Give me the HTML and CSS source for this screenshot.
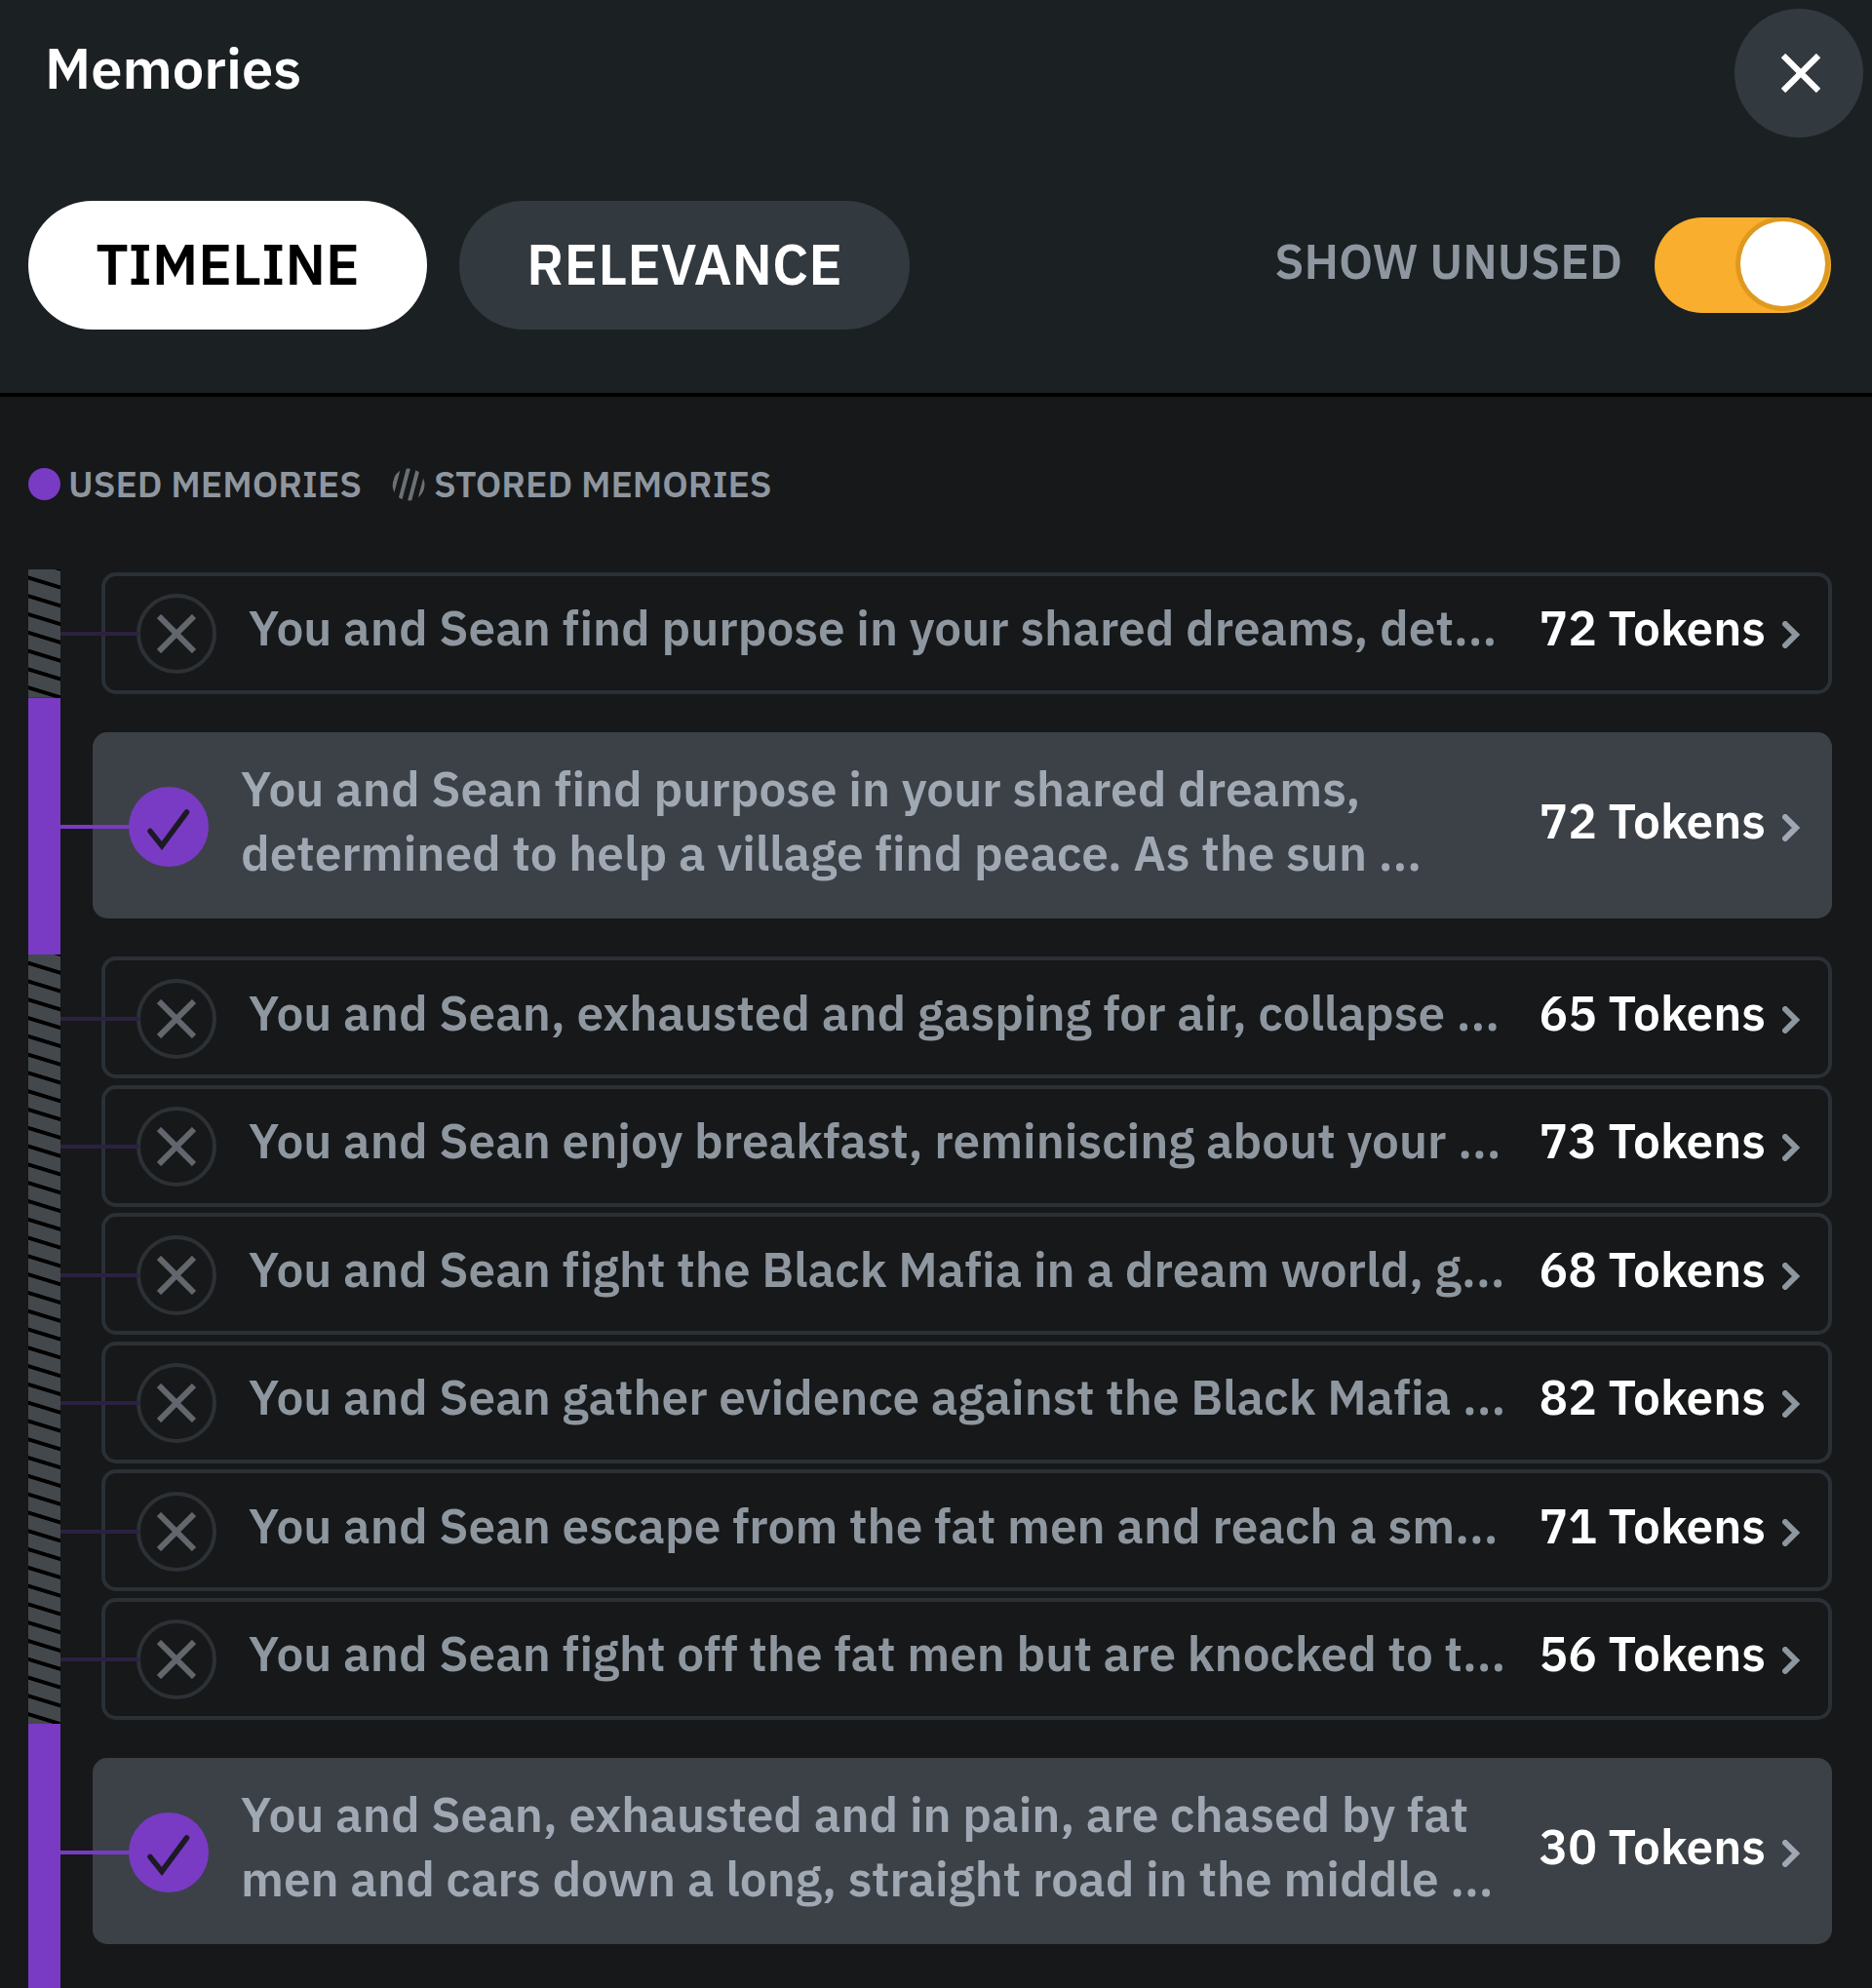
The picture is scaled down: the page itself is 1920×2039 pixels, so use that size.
FILE: index.html
```
<!DOCTYPE html>
<html lang="en">
<head>
<meta charset="utf-8">
<title>Memories</title>
<link rel="stylesheet" href="styles.css">
</head>
<body>
<svg class="defs" aria-hidden="true">
  <symbol id="cross" viewBox="0 0 40 40"><path d="M2 2 38 38M38 2 2 38"/></symbol>
  <symbol id="check" viewBox="0 0 82 82"><path d="M22 45.5 34 60.5 59.500 26"/></symbol>
  <symbol id="chevron" viewBox="0 0 18 28"><path d="M3 3 14 14 3 25"/></symbol>
</svg>
<header class="header">
  <div class="title-row">
    <h1 class="title">Memories</h1>
    <button class="close" aria-label="Close"><svg><use href="#cross"/></svg></button>
  </div>
  <div class="controls">
    <button class="tab tab-timeline active">TIMELINE</button>
    <button class="tab tab-relevance">RELEVANCE</button>
    <span class="toggle-label">SHOW UNUSED</span>
    <span class="toggle" role="switch" aria-checked="true"><span class="knob"></span></span>
  </div>
</header>
<main>
  <div class="legend">
    <span class="dot"></span><span class="legend-text legend-used">USED MEMORIES</span>
    <svg class="hatch" viewBox="0 0 34 34"><clipPath id="c"><circle cx="17" cy="17" r="16.500"/></clipPath><g clip-path="url(#c)"><path d="M-2 34 7 0M8 34 17 0M18 34 27 0M28 34 37 0"/></g></svg>
    <span class="legend-text">STORED MEMORIES</span>
  </div>
  <div class="timeline">
    <section class="group stored">
      <article class="row"><div class="card"><span class="mark"><svg><use href="#cross"/></svg></span><p class="text">You and Sean find purpose in your shared dreams, det...</p><span class="tokens">72 Tokens</span><svg class="chevron"><use href="#chevron"/></svg></div></article>
    </section>
    <section class="group used">
      <article class="row"><div class="card"><span class="mark"><svg><use href="#check"/></svg></span><p class="text">You and Sean find purpose in your shared dreams,<br>determined to help a village find peace. As the sun ...</p><span class="tokens">72 Tokens</span><svg class="chevron"><use href="#chevron"/></svg></div></article>
    </section>
    <section class="group stored">
      <article class="row"><div class="card"><span class="mark"><svg><use href="#cross"/></svg></span><p class="text">You and Sean, exhausted and gasping for air, collapse ...</p><span class="tokens">65 Tokens</span><svg class="chevron"><use href="#chevron"/></svg></div></article>
      <article class="row"><div class="card"><span class="mark"><svg><use href="#cross"/></svg></span><p class="text">You and Sean enjoy breakfast, reminiscing about your ...</p><span class="tokens">73 Tokens</span><svg class="chevron"><use href="#chevron"/></svg></div></article>
      <article class="row"><div class="card"><span class="mark"><svg><use href="#cross"/></svg></span><p class="text">You and Sean fight the Black Mafia in a dream world, g...</p><span class="tokens">68 Tokens</span><svg class="chevron"><use href="#chevron"/></svg></div></article>
      <article class="row"><div class="card"><span class="mark"><svg><use href="#cross"/></svg></span><p class="text">You and Sean gather evidence against the Black Mafia ...</p><span class="tokens">82 Tokens</span><svg class="chevron"><use href="#chevron"/></svg></div></article>
      <article class="row"><div class="card"><span class="mark"><svg><use href="#cross"/></svg></span><p class="text">You and Sean escape from the fat men and reach a sm...</p><span class="tokens">71 Tokens</span><svg class="chevron"><use href="#chevron"/></svg></div></article>
      <article class="row"><div class="card"><span class="mark"><svg><use href="#cross"/></svg></span><p class="text">You and Sean fight off the fat men but are knocked to t...</p><span class="tokens">56 Tokens</span><svg class="chevron"><use href="#chevron"/></svg></div></article>
    </section>
    <section class="group used last">
      <article class="row"><div class="card"><span class="mark"><svg><use href="#check"/></svg></span><p class="text">You and Sean, exhausted and in pain, are chased by fat<br>men and cars down a long, straight road in the middle ...</p><span class="tokens">30 Tokens</span><svg class="chevron"><use href="#chevron"/></svg></div></article>
    </section>
  </div>
</main>
</body>
</html>
```
FILE: styles.css
```
* { box-sizing: border-box; }

body {
  margin: 0;
  height: 2039px;
  overflow: hidden;
  background: #161819;
  color: #8e969f;
  font-family: "IBM Plex Sans", Inter, "Liberation Sans", sans-serif;
  font-weight: 600;
  font-size: 49.5px;
  line-height: 65.75px;
  font-variant-ligatures: none;
}

button { border: 0; padding: 0; font: inherit; color: #fff; background: #32393f; }
svg { fill: none; stroke: currentColor; }
.defs { display: none; }

/* Header */
.header {
  height: 407px;
  padding: 9px 8px 0 29px;
  background: #1b2023;
  border-bottom: 4px solid #000;
}
.title-row { display: flex; justify-content: space-between; }
.title {
  margin: 0;
  padding: 23px 0 0 17px;
  color: #fff;
  font-size: 57.8px;
  font-weight: 600;
  line-height: 76px;
}
.close {
  width: 132px;
  height: 132px;
  margin-right: 1px;
  border-radius: 50%;
  display: flex;
  align-items: center;
  justify-content: center;
}
.close svg { width: 40px; height: 40px; margin-left: 4px; stroke-width: 6.2; }
.controls {
  display: flex;
  align-items: center;
  margin-top: 65px;
  padding-right: 34px;
}
.tab {
  height: 132px;
  border-radius: 66px;
  padding-bottom: 2px;
  font-size: 57.8px;
}
.tab-timeline { width: 409px; margin-right: 33px; }
.tab-relevance { width: 462px; }
.tab.active { background: #fff; color: #000; }
.toggle-label { margin-left: auto; margin-right: 33px; padding-bottom: 8px; }
.toggle {
  width: 181px;
  height: 98px;
  border-radius: 49px;
  background: #f9ae2d;
  display: flex;
  justify-content: flex-end;
  padding: 4px 6px;
  overflow: hidden;
}
.knob {
  width: 87px;
  height: 87px;
  border-radius: 50%;
  background: #fff;
  box-shadow: 0 0 0 5px #df991f;
}

/* Legend */
.legend {
  display: flex;
  align-items: center;
  height: 49px;
  margin: 65px 0 63.3px 29px;
  font-size: 37.3px;
  line-height: 49px;
}
.dot { width: 33px; height: 33px; border-radius: 50%; background: #793bc3; margin-right: 8px; }
.legend-used { width: 332px; }
.hatch { width: 34px; height: 34px; margin-right: 9px; color: #6a7075; stroke-width: 4; }

/* Timeline: each group draws its stretch of the rail as a background */
.timeline { padding-left: 29px; }
.group { padding-left: 33px; }
.group.stored {
  background: repeating-linear-gradient(197deg, #000 0 1.6px, #43484c 2.400px 15.6px, #000 16.4px 17.97px) left / 33px 100% no-repeat;
}
.group.used { background: linear-gradient(#793bc3, #793bc3) left / 33px 100% no-repeat; }
.group.last { height: 272px; }
.row {
  position: relative;
  height: 131.5px;
  padding: 2.5px 41px 4px 42px;
}
.used .row { height: 263px; padding: 35.3px 41px 36.500px 33px; }

/* Connector from the rail to the status mark, drawn over the card edge */
.row::before {
  content: "";
  position: absolute;
  left: 0;
  top: 64px;
  width: 81px;
  height: 4px;
  background: #2c2140;
}
.used .row::before { top: 130px; width: 71px; background: #793bc3; }

.card {
  display: flex;
  align-items: center;
  height: 100%;
  border: 4px solid #2a3036;
  border-radius: 15px;
  padding: 0 29px 0 32px;
}
.used .card { padding-left: 33px; border-color: #3c4147; background: #3c4147; color: #a0a9b3; }
.mark {
  flex: none;
  width: 82px;
  height: 82px;
  margin-top: 2px;
  border: 4px solid #2c3136;
  border-radius: 50%;
  display: flex;
  align-items: center;
  justify-content: center;
  color: #62666d;
}
.mark svg { width: 40px; height: 40px; stroke-width: 6; }
.used .mark { border: 0; background: #793bc3; color: #1c1a24; }
.used .mark svg { width: 82px; height: 82px; stroke-width: 5.5; stroke-linecap: round; }
.text { margin: 0; padding: 0 0 10px 33px; white-space: nowrap; flex: 1; }
.tokens { flex: none; padding-bottom: 10px; color: #fff; width: 249.5px; }
.chevron { flex: none; width: 18px; height: 28px; margin-top: 4px; stroke-width: 6; stroke-linecap: round; }
```
